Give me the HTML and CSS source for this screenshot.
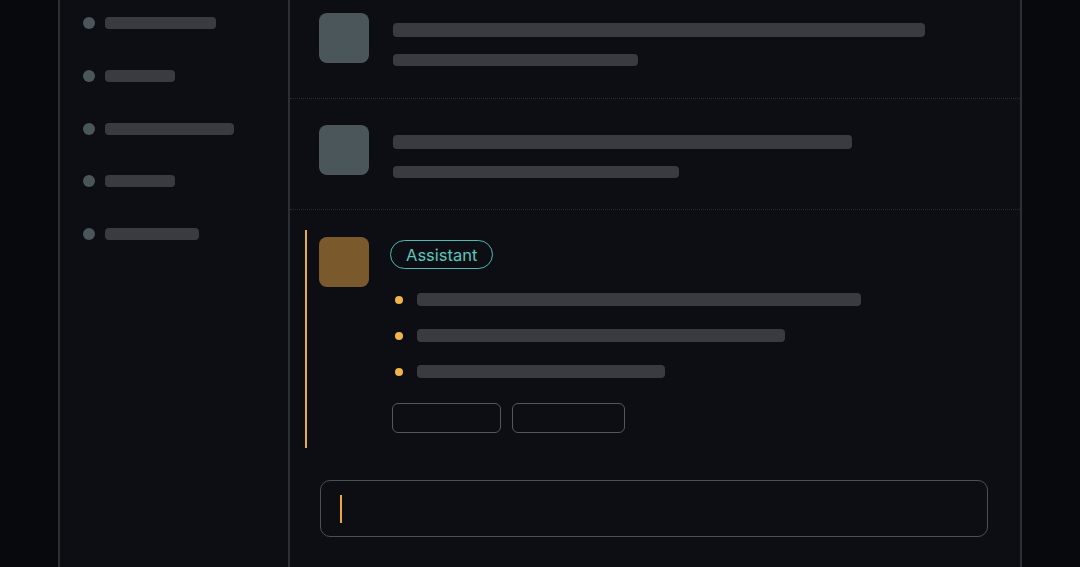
FILE: index.html
```html
<!DOCTYPE html>
<html lang="en">
<head>
    <meta charset="UTF-8">
    <meta name="viewport" content="width=device-width, initial-scale=1.0">
    <title>Chat</title>
    <link rel="stylesheet" href="styles.css">
</head>

<body>
    <div class="app">
        <aside class="sidebar">
            <div class="nav-item"><span class="nav-dot"></span><span class="bar nav-bar" style="width: 111px"></span></div>
            <div class="nav-item"><span class="nav-dot"></span><span class="bar nav-bar" style="width: 70px"></span></div>
            <div class="nav-item"><span class="nav-dot"></span><span class="bar nav-bar" style="width: 129px"></span></div>
            <div class="nav-item"><span class="nav-dot"></span><span class="bar nav-bar" style="width: 70px"></span></div>
            <div class="nav-item"><span class="nav-dot"></span><span class="bar nav-bar" style="width: 94px"></span></div>
        </aside>

        <main class="chat">
            <div class="message first">
                <div class="avatar"></div>
                <div class="lines">
                    <span class="bar line-main" style="width: 532px"></span>
                    <span class="bar line-sub" style="width: 245px"></span>
                </div>
            </div>

            <div class="message">
                <div class="avatar"></div>
                <div class="lines">
                    <span class="bar line-main" style="width: 459px"></span>
                    <span class="bar line-sub" style="width: 286px"></span>
                </div>
            </div>

            <div class="message active">
                <div class="reply">
                    <div class="avatar assistant"></div>
                    <div class="reply-body">
                        <span class="badge">Assistant</span>
                        <ul class="points">
                            <li><span class="bar point-bar" style="width: 444px"></span></li>
                            <li><span class="bar point-bar" style="width: 368px"></span></li>
                            <li><span class="bar point-bar" style="width: 248px"></span></li>
                        </ul>
                        <div class="actions">
                            <span class="action" style="width: 107px"></span>
                            <span class="action" style="width: 111px"></span>
                        </div>
                    </div>
                </div>
            </div>

            <div class="composer">
                <span class="caret"></span>
            </div>
        </main>
    </div>
</body>

</html>
```

FILE: styles.css
```css
body {
    margin: 0;
    height: 567px;
    overflow: hidden;
    background-color: #08090c;
    font-family: Inter, "Noto Sans", sans-serif;
}

.app {
    display: flex;
    height: 567px;
    width: 960px;
    margin-left: 58px;
    border-left: 2px solid #2c2f34;
    border-right: 2px solid #2c2f34;
    background-color: #0d0e13;
}

/* Sidebar */
.sidebar {
    width: 230px;
    flex-shrink: 0;
    border-right: 2px solid #2c2f34;
    display: flex;
    flex-direction: column;
    gap: 40.75px;
    padding: 17px 0 0 23px;
    box-sizing: border-box;
}

.nav-item {
    display: flex;
    align-items: center;
    gap: 10px;
    height: 12px;
}

.nav-dot {
    width: 12px;
    height: 12px;
    border-radius: 50%;
    background-color: #4a5659;
}

.bar {
    display: block;
    background-color: #3a3b41;
    border-radius: 4px;
}

.nav-bar {
    height: 12px;
}

/* Chat area */
.chat {
    flex: 1;
    display: flex;
    flex-direction: column;
}

.message {
    display: flex;
    align-items: flex-start;
    gap: 24px;
    padding: 26px 0 31px 29px;
    border-bottom: 1px dotted #2a2d32;
}

.message.first {
    padding-top: 13px;
    padding-bottom: 32px;
}

.avatar {
    width: 50px;
    height: 50px;
    border-radius: 8px;
    background-color: #4a5659;
    flex-shrink: 0;
}

.avatar.assistant {
    background-color: #7a5a2d;
}

.lines {
    display: flex;
    flex-direction: column;
    gap: 17px;
    padding-top: 10px;
}

.line-main {
    height: 14px;
}

.line-sub {
    height: 12px;
}

/* Assistant reply */
.message.active {
    border-bottom: none;
    padding: 20px 0 0 15px;
}

.reply {
    display: flex;
    gap: 22px;
    border-left: 2px solid #e9ac3f;
    padding: 7px 0 15px 12px;
}

.reply-body {
    display: flex;
    flex-direction: column;
    align-items: flex-start;
    padding-top: 3px;
}

.badge {
    display: inline-flex;
    align-items: center;
    height: 27px;
    padding: 0 15px;
    border: 1.5px solid #4dbab3;
    border-radius: 16px;
    color: #5cc6bf;
    font-size: 16.5px;
    margin-left: -1px;
}

.points {
    list-style: none;
    margin: 24px 0 0 0;
    padding: 0;
    display: flex;
    flex-direction: column;
    gap: 23px;
}

.points li {
    display: flex;
    align-items: center;
    gap: 14px;
    padding-left: 4px;
}

.points li::before {
    content: "";
    width: 8px;
    height: 8px;
    border-radius: 50%;
    background-color: #f0b44c;
}

.point-bar {
    height: 13px;
}

.actions {
    display: flex;
    gap: 11px;
    margin-top: 25px;
    margin-left: 1px;
}

.action {
    height: 28px;
    border: 1.5px solid #52575d;
    border-radius: 6px;
}

/* Input box */
.composer {
    margin: 32px 32px 0 30px;
    height: 55px;
    border: 1.5px solid #4a5056;
    border-radius: 10px;
    display: flex;
    align-items: center;
    padding-left: 19px;
}

.caret {
    width: 2px;
    height: 28px;
    background-color: #e6a93a;
}
```
